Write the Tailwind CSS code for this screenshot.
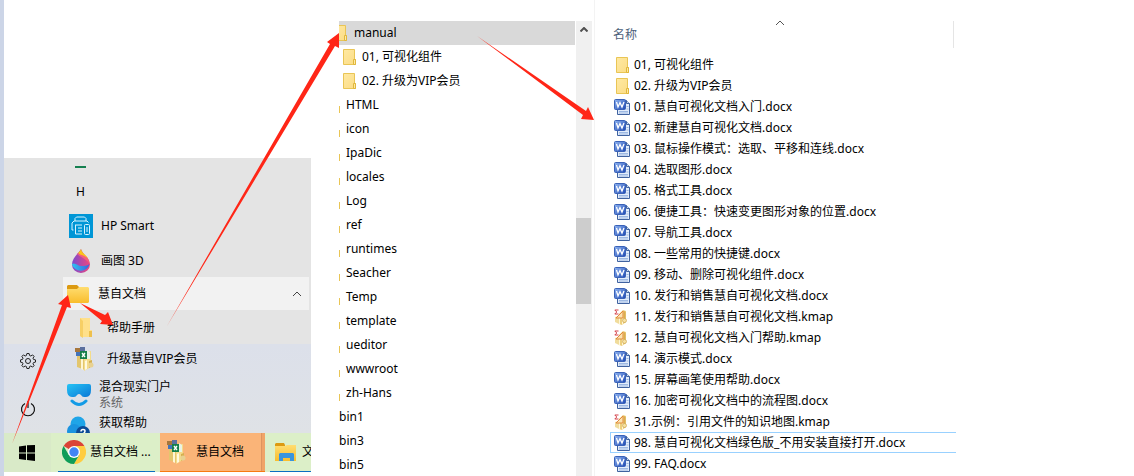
<!DOCTYPE html>
<html lang="zh-CN">
<head>
<meta charset="UTF-8">
<meta name="viewport" content="width=device-width, initial-scale=1.0">
<title>慧自文档</title>
<script src="https://cdn.jsdelivr.net/npm/@tailwindcss/browser@4"></script>
</head>
<body class="bg-white text-black text-[12px] leading-4 font-['Noto_Sans','Noto_Sans_CJK_SC',sans-serif]">

<!-- Shared icons -->
<svg class="absolute size-0" aria-hidden="true">
    <defs>
        <linearGradient id="g-folder" x1="0" y1="0" x2="1" y2="1"><stop offset="0" stop-color="#ffe9a2"/><stop offset="1" stop-color="#fbdc85"/></linearGradient>
        <linearGradient id="g-folder2" x1="0" y1="0" x2="0" y2="1"><stop offset="0" stop-color="#ffdd70"/><stop offset="1" stop-color="#f9bd2c"/></linearGradient>
        <linearGradient id="g-word" x1="0" y1="0" x2="1" y2="1"><stop offset="0" stop-color="#8fb4f0"/><stop offset="1" stop-color="#1c48b4"/></linearGradient>
        <linearGradient id="g-vr" x1="0" y1="0" x2="1" y2="1"><stop offset="0" stop-color="#25c3f5"/><stop offset="1" stop-color="#0b78d6"/></linearGradient>
        <linearGradient id="g-drop" x1="0" y1="0" x2="1" y2="0"><stop offset="0" stop-color="#7b4bd0"/><stop offset="1" stop-color="#f0467c"/></linearGradient>
        <linearGradient id="g-drop2" x1="0" y1="0" x2="1" y2="0"><stop offset="0" stop-color="#2fc4f2"/><stop offset="1" stop-color="#3b62dc"/></linearGradient>
    </defs>
    <symbol id="i-folder" viewBox="0 0 16 16">
        <path d="M2.5.5h11v10h1v5h-12z" fill="url(#g-folder)" stroke="#e9c555"/>
        <path d="M12.500 15.500v-5h2v5z" fill="#ffe9a2" stroke="#e0b73c"/>
    </symbol>
    <symbol id="i-word" viewBox="0 0 16 16">
        <path d="M3.500 1.500h9l3 3v11h-12z" fill="#e3edfb" stroke="#3f62a0"/>
        <path d="M12.500 1.500v3h3" fill="#c6d8f3" stroke="#3f62a0"/>
        <path d="M5 12.500h9M5 14h9M12.500 7.500h2M12.500 10h2" stroke="#9db8e2"/>
        <rect x=".5" y=".5" width="11" height="10" rx="1" fill="url(#g-word)" stroke="#3a62b8"/>
        <path d="M2.500 3l1.500 5 2-4.500 2 4.500 2-5" fill="none" stroke="#fff" stroke-width="1.300"/>
    </symbol>
    <symbol id="i-kmap" viewBox="0 0 16 16">
        <path d="M1 8l4-1v8l-4-2z" fill="#f0dc9c"/>
        <path d="M5 5l4-4 3 1v11l-4 3-3-1z" fill="#edcf7c"/>
        <path d="M8 9l1-1v7l-1 1zM5 9h1v6H5z" fill="#fff6d6"/>
        <path d="M2 9l7-7v7z" fill="#fbe3b0" stroke="#e0883a"/>
        <path d="M10 2l1.500 1v10L10 14z" fill="#d9ae52"/>
        <circle cx="10.500" cy="11.500" r="2" fill="#f6e2a2" stroke="#cfa654" stroke-width=".7"/>
        <path d="M4.500 1H.8l2 2-2 2h3.700" fill="none" stroke="#d4424a"/>
    </symbol>
    <symbol id="i-app" viewBox="0 0 20 24">
        <path d="M2 7l8 2v14l-8-3z" fill="#e3c66e"/>
        <path d="M9 5l7-1v16l-7 4z" fill="#f4dc8b"/>
        <path d="M6 9l2 1v13l-2-1z" fill="#fff6d3"/>
        <path d="M10 14l2-1v9l-2 1z" fill="#fff9df"/>
        <path d="M14 14l3-1v6l-3 2z" fill="#d5af50"/>
        <circle cx="16" cy="18" r="2.500" fill="#e8d191"/>
        <path d="M0 1h5v4H0z" fill="#a7763b"/>
        <path d="M5 0h5v5H5z" fill="#5b6f9e"/>
        <path d="M1 5h4v4H1z" fill="#4373b9"/>
        <path d="M5 4h7v8H5z" fill="#17804a"/>
        <path d="M7 6l3 4M10 6l-3 4" stroke="#fff" stroke-width="1.300"/>
        <path d="M12 3l3 2v7h-3z" fill="#e9f3e5"/>
    </symbol>
</svg>

<div class="relative flex h-screen overflow-hidden">

    <!-- Start menu -->
    <aside class="w-[311px] shrink-0 border-l-4 border-[#ccd5e7] flex flex-col">
        <div class="h-[158px] shrink-0"></div>
        <nav class="flex flex-col h-[275px] shrink-0 relative overflow-hidden bg-linear-to-b from-[#dce0ea] from-[68%] to-[#dfe2e6]">
            <div class="bg-[#e4e4e4] flex flex-col">
                <div class="h-[18px] pl-[71px] pt-2"><div class="w-[11px] h-[2px] bg-[#158050]"></div></div>
                <div class="h-8 flex items-center pl-[72px]">H</div>
                <a href="#" class="h-9 flex items-center pl-[65px] gap-2">
                    <svg class="size-6" viewBox="0 0 24 24">
                        <path fill="#0096d6" d="M0 0h24v24H0z"/>
                        <g fill="none" stroke="#d9f3ff">
                            <path d="M6 7V4.500L7.500 3h8L17 4.500V7M4.500 16H3V9l2-2h13l1.500 1.500M6 11h7M6.500 11v9H13M9 14h4M9 17h4"/>
                            <rect x="15.500" y="10.500" width="5" height="10" rx="1"/>
                            <path d="M18 13v5"/>
                        </g>
                    </svg>
                    HP Smart
                </a>
                <a href="#" class="h-[34px] flex items-center pl-[65px] gap-2">
                    <svg class="size-6" viewBox="0 0 24 24">
                        <path d="M12 0C10 4 3 9 3 15.500a9 8.500 0 0 0 18 0C21 9 14 6 12 0z" fill="url(#g-drop)"/>
                        <path d="M12 0c-1 2-2 3-3 4 3 4 8 3 10 6 0-3-6-5-7-10z" fill="#fcc419"/>
                        <path d="M8 5c3 3 8 4 12 9 0-3-1-5-3-6-3-2-6-2-8-4z" fill="#f4607a"/>
                        <path d="M3 15c3-2 6 2 9 2s6 0 8.500-2a9 8.500 0 0 1-17.500.500z" fill="url(#g-drop2)"/>
                    </svg>
                    画图 3D
                </a>
                <button type="button" class="h-[33px] -mt-px ml-[59px] mr-0.5 pl-1 pr-2 flex items-center gap-2 bg-[#f2f2f2] text-left">
                    <svg class="size-6" viewBox="0 0 24 24">
                        <path d="M0 5V4l1-1h9l2 2v4H0z" fill="#dc9a12"/>
                        <path d="M0 7h10l2-2h9l1 1v14l-1 1H1l-1-1z" fill="url(#g-folder2)"/>
                    </svg>
                    <span class="flex-1 -ml-px">慧自文档</span>
                    <svg class="w-2 h-1" viewBox="0 0 8 4"><path d="M0 4l4-4 4 4" fill="none" stroke="#444"/></svg>
                </button>
                <a href="#" class="h-[34px] flex items-center pt-0.5 pl-[74px] gap-[11px]">
                    <svg class="w-[18px] h-5" viewBox="0 0 18 20">
                        <path d="M2 0h10v12h2v7H3l-1-2z" fill="#ffe08a"/><path d="M2 0l3 3v17l-3-2z" fill="#f7cf65"/><path d="M11 13h3v6h-3z" fill="#eec04d"/>
                    </svg>
                    帮助手册
                </a>
            </div>
            <a href="#" class="h-[29px] flex items-center pl-[71px] gap-3">
                <svg class="w-5 h-6"><use href="#i-app"/></svg>
                升级慧自VIP会员
            </a>
            <a href="#" class="h-[39px] flex items-center pt-1 pl-[63px] gap-2">
                <svg class="size-6" viewBox="0 0 24 24">
                    <path d="M0 3q0-2 2-2h20q2 0 2 2v4q0 7-5 7h-2q-2 0-3-2-2-2-4 0-1 2-3 2H5q-5 0-5-7z" fill="url(#g-vr)"/>
                    <path d="M5 18q7 7 14 0" fill="none" stroke="#139be6" stroke-width="3" stroke-linecap="round"/>
                </svg>
                <span class="flex flex-col">混合现实门户<span class="text-[#666]">系统</span></span>
            </a>
            <a href="#" class="h-[21px] flex items-start pl-[63px] gap-2">
                <svg class="size-6 mt-1 shrink-0" viewBox="0 0 24 24">
                    <circle cx="11" cy="8" r="7.500" fill="#1fa5e8"/><circle cx="7" cy="15" r="7" fill="#1a94e0"/>
                    <circle cx="16" cy="17" r="7" fill="#0b4b96"/><path d="M14 15.500q0-2 2-2t2 1.500-2 3" fill="none" stroke="#fff" stroke-width="1.500"/>
                </svg>
                <span class="pt-[3px]">获取帮助</span>
            </a>
            <!-- settings and power rail -->
            <div class="absolute left-4 top-[195px] flex flex-col gap-8">
                <button type="button" aria-label="设置">
                    <svg class="size-4" viewBox="0 0 16 16" fill="none" stroke="#222">
                        <path d="M6.900.5h2.200l.5 2 1.200.5 1.800-1.100 1.500 1.500L13 5.200l.5 1.200 2 .5v2.200l-2 .5-.5 1.200 1.100 1.800-1.500 1.500-1.800-1.100-1.200.5-.5 2H6.900l-.5-2-1.200-.5-1.800 1.100-1.500-1.500L3 10.800l-.5-1.200-2-.5V6.900l2-.5L3 5.200 1.900 3.400l1.500-1.500L5.200 3l1.200-.5z"/>
                        <circle cx="8" cy="8" r="2.500"/>
                    </svg>
                </button>
                <button type="button" aria-label="电源">
                    <svg class="size-4" viewBox="0 0 16 16" fill="none" stroke="#111" stroke-width="1.200"><path d="M5 2.500a6.500 6.500 0 1 0 6 0M8 0v7"/></svg>
                </button>
            </div>
        </nav>

        <!-- Taskbar -->
        <footer class="h-[39px] shrink-0 flex overflow-hidden bg-[#dcefc8]">
            <button type="button" aria-label="开始" class="w-[47px] shrink-0 pl-[15px] bg-[#d9eac8]">
                <svg class="size-4" viewBox="0 0 16 16"><path d="M0 1.500l7-1v7H0zM8 .3L16 0v7.500H8zM0 8.500h7v6.500l-7-1zM8 8.500h8V16l-8-1z"/></svg>
            </button>
            <button type="button" class="w-[97px] ml-[7px] shrink-0 flex items-center gap-1 pl-1 border-b border-[#0a6fc2] whitespace-nowrap">
                <svg class="size-6" viewBox="0 0 24 24">
                    <path d="M12 12L1.600 6A12 12 0 0 1 22.400 6z" fill="#db4437"/>
                    <path d="M12 12V6h10.400A12 12 0 0 1 12 24l5.200-9z" fill="#ffcd40"/>
                    <path d="M12 12l5.200 3L12 24A12 12 0 0 1 1.600 6l5.200 9z" fill="#0f9d58"/>
                    <circle cx="12" cy="12" r="6" fill="#fff"/><circle cx="12" cy="12" r="4.700" fill="#4285f4"/>
                </svg>
                慧自文档 ...
            </button>
            <button type="button" class="w-[105px] ml-[5px] shrink-0 flex items-center gap-[9px] pl-[7px] bg-[#fab478] border-b border-[#f77a12]">
                <svg class="w-5 h-6"><use href="#i-app"/></svg>
                <span class="flex-1 text-left">慧自文档</span>
                <span class="w-1 h-full bg-[#f0a468] border-l border-[#dd9560]"></span>
            </button>
            <button type="button" class="flex-1 min-w-0 ml-[5px] flex items-center gap-1 pl-1 border-b border-[#0a6fc2] overflow-hidden">
                <svg class="size-6 shrink-0" viewBox="0 0 24 24">
                    <path d="M1 5V4l1-1h8l1 2v3H1z" fill="#dc9a12"/>
                    <path d="M1 6h10l2-1h9v16H1z" fill="url(#g-folder2)"/>
                    <path d="M5 21v-7l1-1h13l1 1v7h-4v-3H9v3z" fill="#3a94dc"/>
                </svg>
                文
            </button>
        </footer>
    </aside>

    <!-- Folder tree -->
    <section class="w-[253px] ml-7 pt-[21px] shrink-0 flex">
        <ul id="tree" class="w-[236px] overflow-hidden"></ul>
        <div class="w-4 ml-px bg-[#f0f0f0] flex flex-col items-center">
            <svg class="w-2 h-[5px] mt-1.5 shrink-0" viewBox="0 0 8 5"><path d="M.5 4.500L4 1l3.500 3.500" fill="none" stroke="#505050" stroke-width="2"/></svg>
            <div class="w-[15px] h-[86px] mt-[186px] mr-px shrink-0 bg-[#cdcdcd]"></div>
        </div>
    </section>

    <!-- File list -->
    <section class="flex-1 ml-0.5 pt-[21px] border-l border-[#f3f3f3]">
        <div class="relative w-[359px] h-[27px] pl-[18px] pt-[6px] border-r border-[#e5e5e5] text-[#4c607a]">
            名称
            <svg class="absolute left-[181px] top-0 w-2 h-1" viewBox="0 0 8 4"><path d="M0 4l4-4 4 4" fill="none" stroke="#555"/></svg>
        </div>
        <ul id="files" class="w-[346px] ml-[15px] mt-[6px]"></ul>
    </section>

    <!-- Arrows -->
    <svg class="absolute left-0 top-0 w-[620px] h-[476px] pointer-events-none" viewBox="0 0 620 476" fill="#ff2617">
        <path d="M12 444L62 305l-4-1 10-9 3 13-4-1z"/>
        <path d="M80 303l25 12 3-3 5 13-13-1 2-3z"/>
        <path d="M167 326L330 44l-3-2 12-9v15l-4-2z"/>
        <path d="M477 36l109 75 2-4 6 13-13-1 2-4z"/>
    </svg>
</div>

<script>
const tree = [
    '01, 可视化组件', '02. 升级为VIP会员', 'HTML', 'icon', 'IpaDic', 'locales', 'Log', 'ref', 'runtimes',
    'Seacher', 'Temp', 'template', 'ueditor', 'wwwroot', 'zh-Hans', 'bin1', 'bin3', 'bin5'
];

const files = [
    ['folder', '01, 可视化组件'],
    ['folder', '02. 升级为VIP会员'],
    ['word', '01. 慧自可视化文档入门.docx'],
    ['word', '02. 新建慧自可视化文档.docx'],
    ['word', '03. 鼠标操作模式：选取、平移和连线.docx'],
    ['word', '04. 选取图形.docx'],
    ['word', '05. 格式工具.docx'],
    ['word', '06. 便捷工具：快速变更图形对象的位置.docx'],
    ['word', '07. 导航工具.docx'],
    ['word', '08. 一些常用的快捷键.docx'],
    ['word', '09. 移动、删除可视化组件.docx'],
    ['word', '10. 发行和销售慧自可视化文档.docx'],
    ['kmap', '11. 发行和销售慧自可视化文档.kmap'],
    ['kmap', '12. 慧自可视化文档入门帮助.kmap'],
    ['word', '14. 演示模式.docx'],
    ['word', '15. 屏幕画笔使用帮助.docx'],
    ['word', '16. 加密可视化文档中的流程图.docx'],
    ['kmap', '31.示例：引用文件的知识地图.kmap'],
    ['word', '98. 慧自可视化文档绿色版_不用安装直接打开.docx'],
    ['word', '99. FAQ.docx']
];

// first row is the selected folder, its icon is cut by the panel edge
let treeHTML = `
    <li class="h-6 flex items-center bg-[#d9d9d9] whitespace-nowrap">
        <svg class="size-4 -ml-[7px] mr-1.5 shrink-0"><use href="#i-folder"/></svg>manual
    </li>`;

tree.forEach((name, i) => {
    if (i < 2) {
        treeHTML += `<li class="h-6 flex items-center pl-0.5 gap-[5px] whitespace-nowrap"><svg class="size-4"><use href="#i-folder"/></svg>${name}</li>`;
    } else if (i < 15) {
        treeHTML += `<li class="h-6 flex items-center gap-1.5"><span class="w-px h-[7px] mt-2 bg-[#e9c555]"></span>${name}</li>`;
    } else {
        treeHTML += `<li class="h-6 flex items-center">${name}</li>`;
    }
});
document.getElementById('tree').innerHTML = treeHTML;

document.getElementById('files').innerHTML = files.map(([icon, name]) => {
    const border = name.startsWith('98') ? 'border-[#99d1ff]' : 'border-transparent';
    return `<li class="h-[21px] flex items-center gap-1 pl-[3px] border border-r-0 whitespace-nowrap ${border}"><svg class="size-4"><use href="#i-${icon}"/></svg>${name}</li>`;
}).join('');
</script>
</body>
</html>
